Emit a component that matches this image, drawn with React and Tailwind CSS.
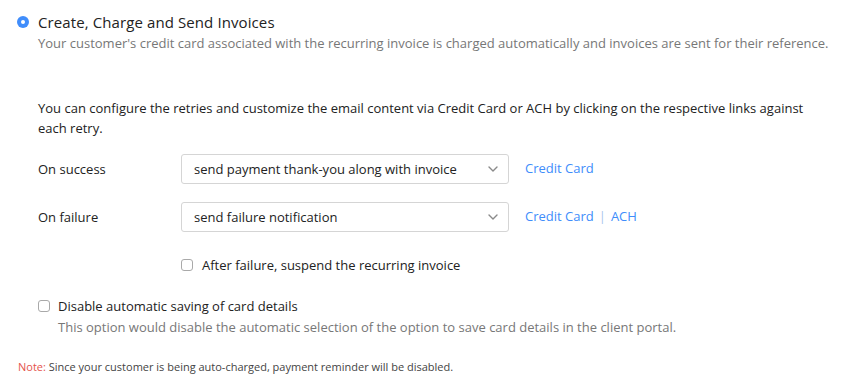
import React from "react";

function Chevron() {
  return (
    <svg width="10" height="6" viewBox="0 0 10 6" fill="none">
      <path d="M1 1l4 4 4-4" stroke="#8a8a8a" strokeWidth="1.4" strokeLinecap="round" strokeLinejoin="round" />
    </svg>
  );
}

function Select({ value }) {
  return (
    <div className="flex h-[30px] w-[328px] items-center justify-between rounded-[3px] border border-[#d5d5d5] bg-white pl-[12px] pr-[10px] text-[13px] text-[#222]">
      <span>{value}</span>
      <Chevron />
    </div>
  );
}

function Box() {
  return <span className="inline-block h-[12px] w-[12px] shrink-0 rounded-[3px] border border-[#a9a9a9] bg-white" />;
}

export default function App() {
  return (
    <div className="min-h-[390px] w-[854px] bg-white font-['Open_Sans',sans-serif] text-[#222]">
      <div className="pl-[17px] pt-[12px]">
        <div className="flex items-center gap-[9px]">
          <span className="flex h-[12px] w-[12px] items-center justify-center rounded-full bg-[#408dfb]">
            <span className="h-[4px] w-[4px] rounded-full bg-white" />
          </span>
          <span className="text-[15px] leading-[20px] tracking-[0.1px] text-[#222]">Create, Charge and Send Invoices</span>
        </div>
        <div className="pl-[21px] text-[13px] leading-[22px] text-[#777]">
          Your customer's credit card associated with the recurring invoice is charged automatically and invoices are sent for their reference.
        </div>
      </div>

      <div className="pl-[38px] pr-[30px] pt-[44px] text-[13px] leading-[20px] text-[#222]">
        <p>
          You can configure the retries and customize the email content via Credit Card or ACH by clicking on the respective links against each retry.
        </p>
        <div className="mt-[16px] flex items-center">
          <span className="w-[143px]">On success</span>
          <Select value="send payment thank-you along with invoice" />
          <span className="ml-[16px] -mt-[2px] text-[#408dfb]">Credit Card</span>
        </div>
        <div className="mt-[18px] flex items-center">
          <span className="w-[143px]">On failure</span>
          <Select value="send failure notification" />
          <span className="ml-[16px] -mt-[2px] text-[#408dfb]">
            Credit Card<span className="mx-[5px] text-[#a8c4ec]">|</span>ACH
          </span>
        </div>
        <div className="mt-[23px] flex items-center gap-[9px] pl-[143px]">
          <Box />
          <span>After failure, suspend the recurring invoice</span>
        </div>
        <div className="mt-[21px] flex items-center gap-[8px]">
          <Box />
          <span>Disable automatic saving of card details</span>
        </div>
        <div className="pl-[20px] pt-[1px] text-[#777]">
          This option would disable the automatic selection of the option to save card details in the client portal.
        </div>
      </div>

      <div className="pl-[18px] pt-[22px] text-[11px] leading-[16px] text-[#444]">
        <span className="text-[#e5534b]">Note:</span> Since your customer is being auto-charged, payment reminder will be disabled.
      </div>
    </div>
  );
}
